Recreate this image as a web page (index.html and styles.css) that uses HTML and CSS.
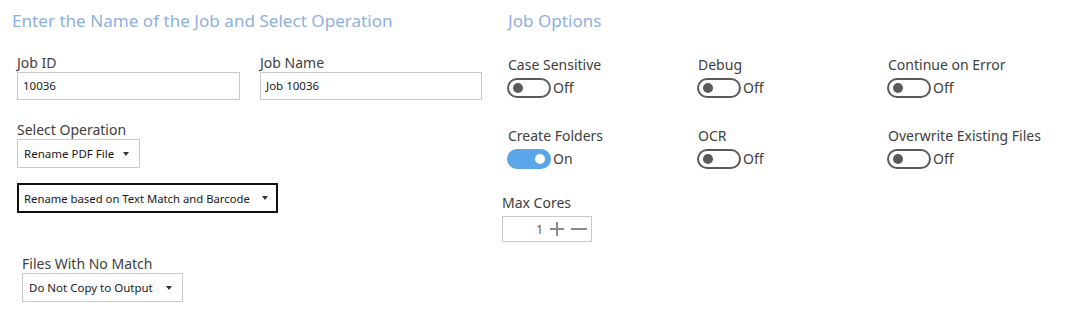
FILE: index.html
```html
<!DOCTYPE html>
<html>
<head>
<meta charset="utf-8">
<link rel="stylesheet" href="styles.css">
</head>
<body>
<div class="page">
  <section class="left">
    <h2 class="title">Enter the Name of the Job and Select Operation</h2>
    <div class="row">
      <div class="field w223">
        <div class="label">Job ID</div>
        <div class="input">10036</div>
      </div>
      <div class="field w222">
        <div class="label">Job Name</div>
        <div class="input">Job 10036</div>
      </div>
    </div>
    <div class="field op">
      <div class="label">Select Operation</div>
      <div class="select w123"><span>Rename PDF File</span><i class="arrow"></i></div>
    </div>
    <div class="select focus w260"><span>Rename based on Text Match and Barcode</span><i class="arrow"></i></div>
    <div class="field nomatch">
      <div class="label">Files With No Match</div>
      <div class="select w160"><span>Do Not Copy to Output</span><i class="arrow"></i></div>
    </div>
  </section>
  <section class="right">
    <h2 class="title">Job Options</h2>
    <div class="options">
      <div class="opt"><div class="label">Case Sensitive</div><div class="tog"><span class="switch"></span><span class="state">Off</span></div></div>
      <div class="opt"><div class="label">Debug</div><div class="tog"><span class="switch"></span><span class="state">Off</span></div></div>
      <div class="opt"><div class="label">Continue on Error</div><div class="tog"><span class="switch"></span><span class="state">Off</span></div></div>
      <div class="opt"><div class="label">Create Folders</div><div class="tog"><span class="switch on"></span><span class="state">On</span></div></div>
      <div class="opt"><div class="label">OCR</div><div class="tog"><span class="switch"></span><span class="state">Off</span></div></div>
      <div class="opt"><div class="label">Overwrite Existing Files</div><div class="tog"><span class="switch"></span><span class="state">Off</span></div></div>
    </div>
    <div class="cores">
      <div class="label">Max Cores</div>
      <div class="spin"><span class="num">1</span><span class="plus"></span><span class="minus"></span></div>
    </div>
  </section>
</div>
</body>
</html>
```
FILE: styles.css
```css
* { box-sizing: border-box; }
html, body { margin: 0; padding: 0; background: #fff; }
body { font-family: "Noto Sans", "Open Sans", sans-serif; color: #3a3a3a; width: 1065px; height: 324px; overflow: hidden; }
.page { display: flex; }
.left { width: 507px; flex: none; padding-left: 17px; padding-top: 8px; }
.right { flex: 1; padding-top: 8px; }
.title { margin: 0 0 0 -5px; font-weight: normal; font-size: 17.1px; line-height: 26px; color: #8fb0dd; }
.right .title { margin-left: 1px; }
.label { font-size: 14px; line-height: 18px; color: #404040; }
.row { display: flex; gap: 20px; margin-top: 20px; }
.w223 { width: 223px; }
.w222 { width: 222px; }
.input { height: 28px; border: 1px solid #c9c9c9; font-size: 11.5px; line-height: 26px; padding-left: 5px; color: #1a1a1a; }
.op { margin-top: 21px; }
.select { display: flex; align-items: center; justify-content: space-between; height: 29px; border: 1px solid #c9c9c9; font-size: 11.5px; color: #1a1a1a; padding: 0 10px 0 6px; }
.select.focus { border: 2px solid #111; padding-left: 5px; padding-right: 8px; margin-top: 15px; height: 30px; font-size: 11.3px; }
.w123 { width: 123px; }
.w260 { width: 261px; }
.w160 { width: 161px; }
.arrow { width: 0; height: 0; border-left: 3.5px solid transparent; border-right: 3.5px solid transparent; border-top: 4px solid #333; }
.nomatch { margin-top: 42px; margin-left: 5px; }
.options { display: grid; grid-template-columns: 190px 190px 190px; row-gap: 29px; margin-top: 22px; }
.opt .label { margin-left: 1px; }
.tog { display: flex; align-items: center; margin-top: 4px; }
.switch { position: relative; width: 44px; height: 20px; border: 2px solid #5a5a5a; border-radius: 10px; }
.switch::after { content: ""; position: absolute; left: 4px; top: 3px; width: 10px; height: 10px; border-radius: 50%; background: #5a5a5a; }
.switch.on { background: #5aa6e8; border-color: #5aa6e8; }
.switch.on::after { left: auto; right: 4px; background: #fff; }
.state { font-size: 14px; line-height: 20px; margin-left: 2px; color: #404040; }
.cores { margin-top: 25px; margin-left: -5px; }
.spin { display: flex; align-items: center; width: 90px; height: 26px; border: 1px solid #c9c9c9; margin-top: 4px; }
.num { width: 40px; text-align: right; font-size: 12px; color: #6b5a14; }
.plus { position: relative; width: 14px; height: 14px; margin-left: 7px; }
.plus::before { content: ""; position: absolute; left: 0; top: 6px; width: 14px; height: 2px; background: #8a8a8a; }
.plus::after { content: ""; position: absolute; left: 6px; top: 0; width: 2px; height: 14px; background: #8a8a8a; }
.minus { width: 16px; height: 2px; background: #8a8a8a; margin-left: 7px; }
```
